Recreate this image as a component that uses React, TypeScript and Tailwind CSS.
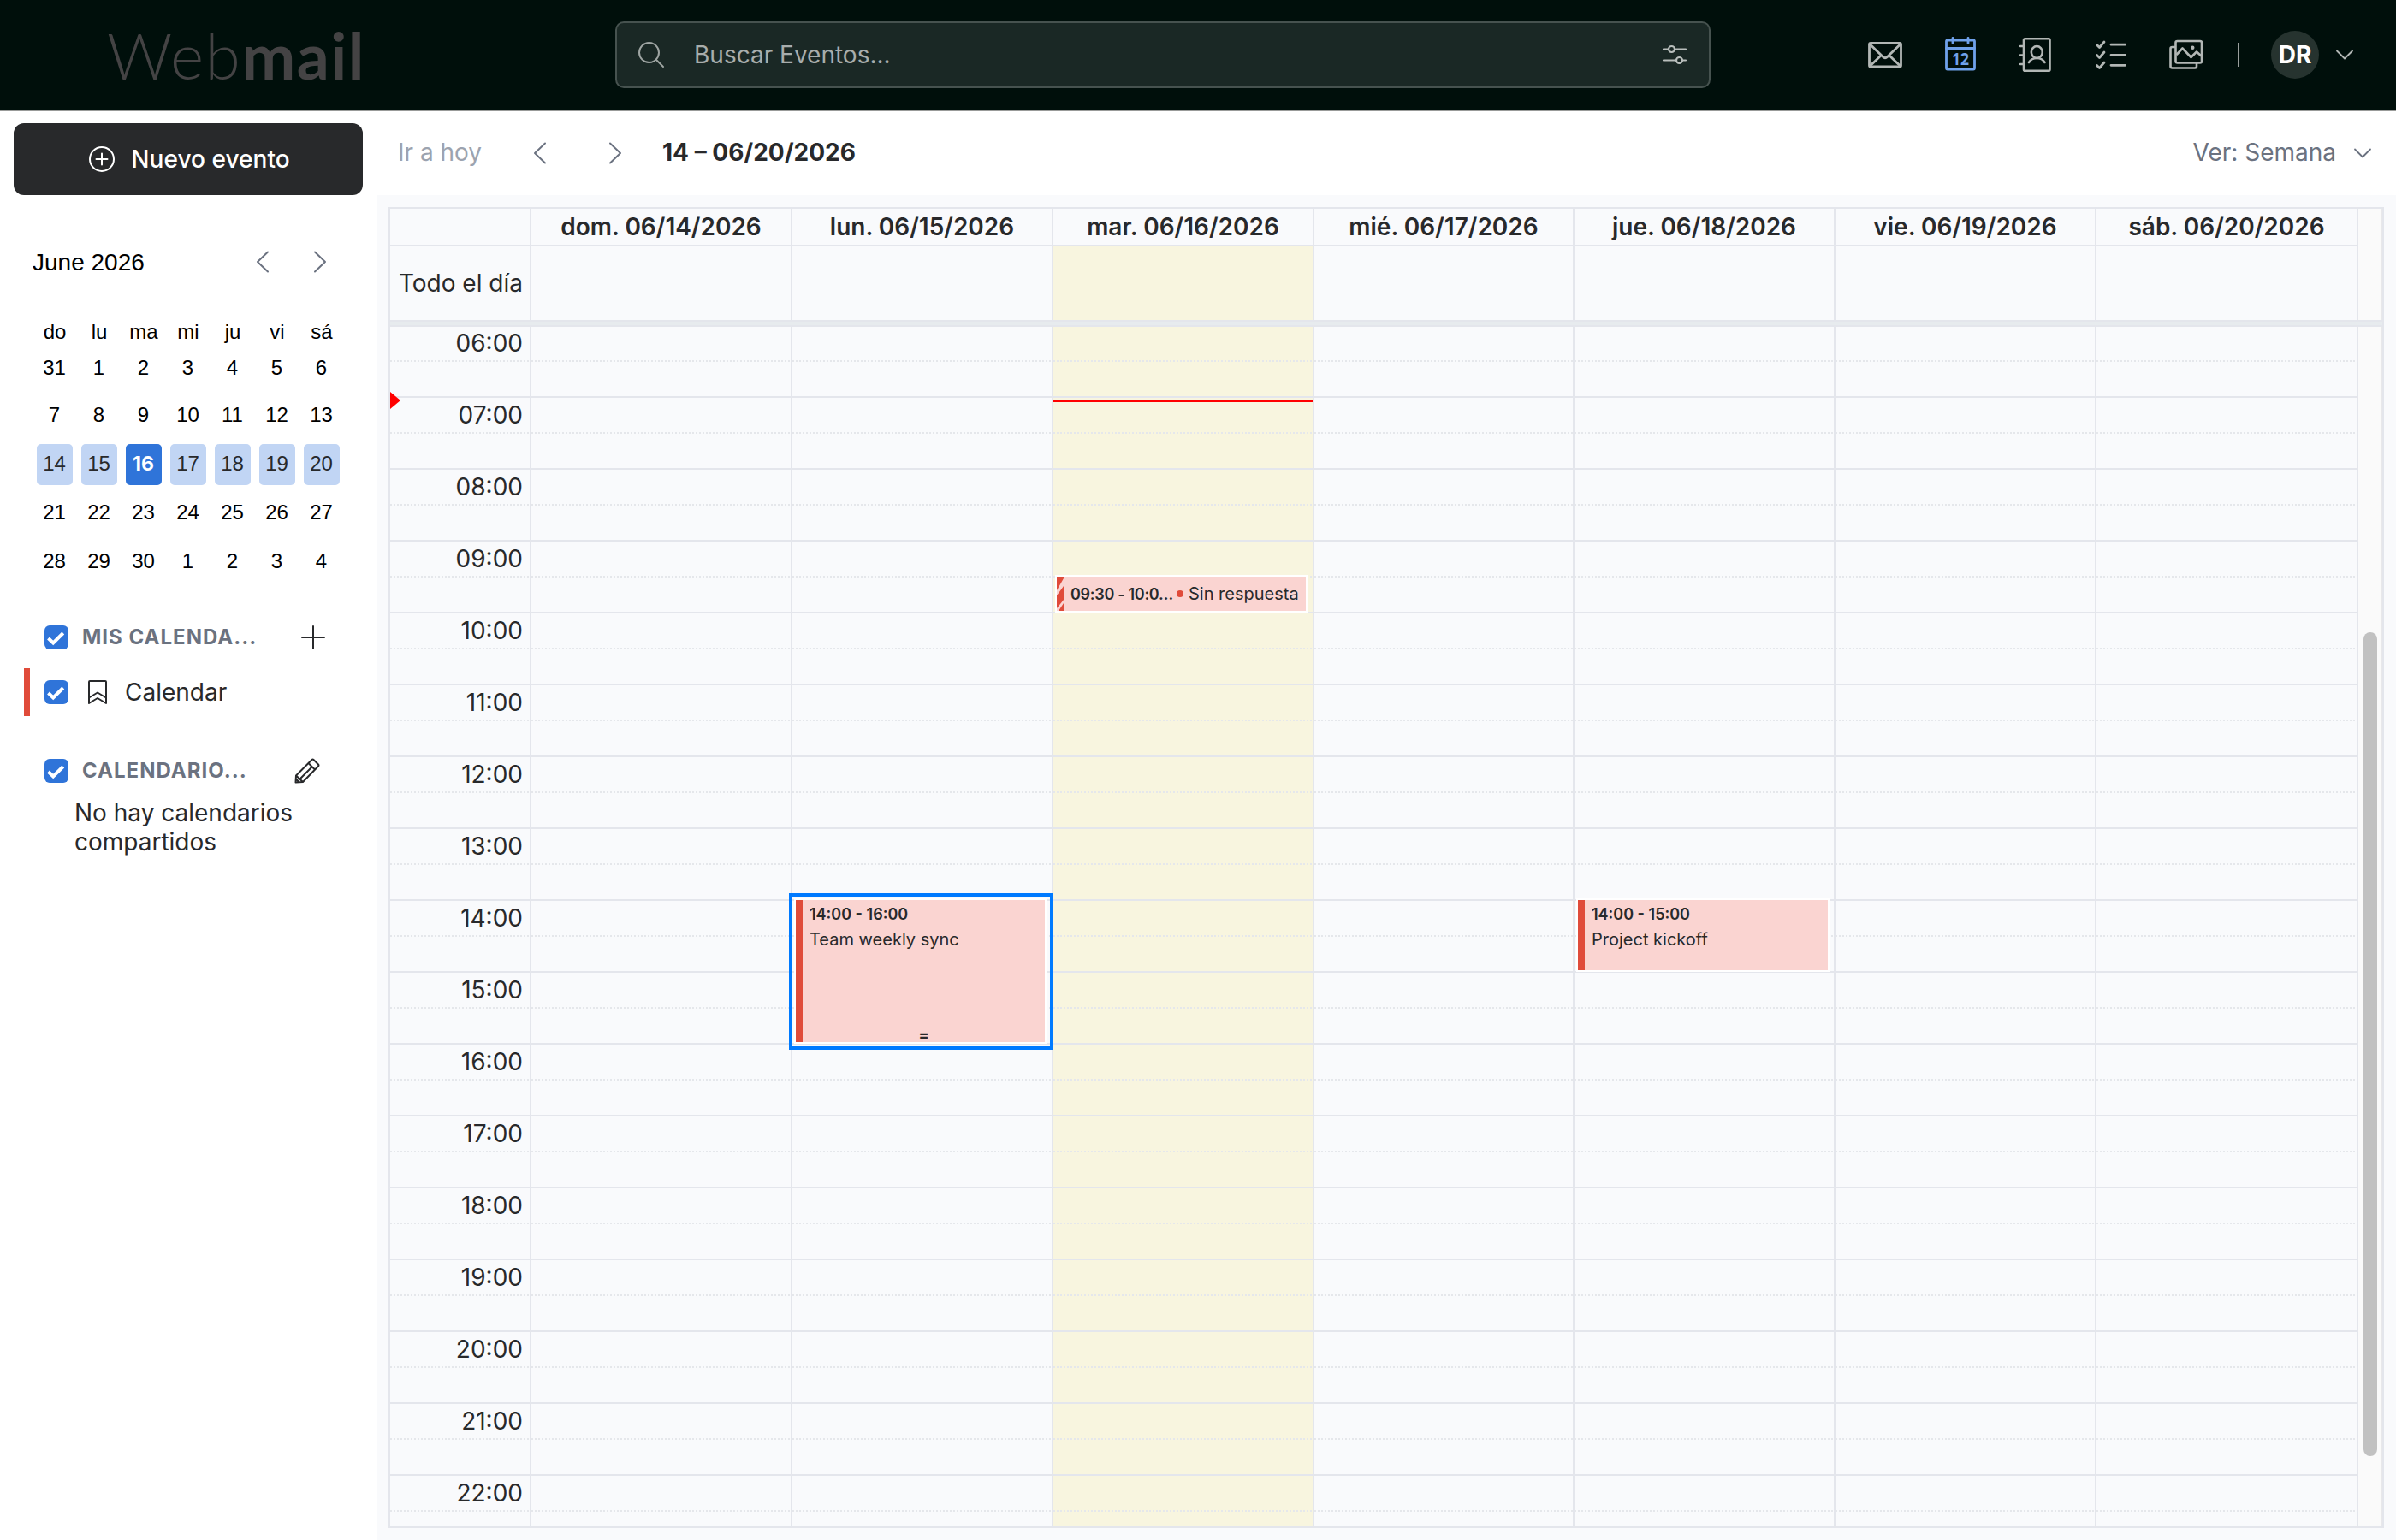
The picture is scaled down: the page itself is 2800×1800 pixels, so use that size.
import React from "react";

const days = [
  "dom. 06/14/2026",
  "lun. 06/15/2026",
  "mar. 06/16/2026",
  "mié. 06/17/2026",
  "jue. 06/18/2026",
  "vie. 06/19/2026",
  "sáb. 06/20/2026",
];
const hours = Array.from({ length: 17 }, (_, i) => `${String(i + 6).padStart(2, "0")}:00`);
const weekdays = ["do", "lu", "ma", "mi", "ju", "vi", "sá"];
const weeks = [
  [31, 1, 2, 3, 4, 5, 6],
  [7, 8, 9, 10, 11, 12, 13],
  [14, 15, 16, 17, 18, 19, 20],
  [21, 22, 23, 24, 25, 26, 27],
  [28, 29, 30, 1, 2, 3, 4],
];

const columns = "grid grid-cols-[165px_305px_305px_305px_304px_305px_305px_306px]";

function Chevron({ dir, className = "" }: { dir: "left" | "right" | "down"; className?: string }) {
  if (dir === "down")
    return (
      <svg className={`h-[12px] w-[22px] ${className}`} viewBox="0 0 22 12" fill="none" stroke="currentColor" strokeWidth="1.8" strokeLinecap="round" strokeLinejoin="round">
        <path d="M2 1.500 11 10.500 20 1.500" />
      </svg>
    );
  return (
    <svg className={`h-[26px] w-[16px] ${className}`} viewBox="0 0 16 26" fill="none" stroke="currentColor" strokeWidth="2" strokeLinecap="round" strokeLinejoin="round">
      <path d={dir === "left" ? "M14 1.5 2 13 14 24.5" : "M2 1.5 14 13 2 24.5"} />
    </svg>
  );
}

function Header() {
  return (
    <header className="flex h-[130px] items-center border-b-2 border-[#999b99] bg-[#000f0b]">
      <div className="w-[719px] shrink-0 pl-[125px]">
        <div className="flex h-[120px] items-center whitespace-nowrap font-[Lato] text-[75px] leading-[90px] tracking-[1.5px] text-[#444344]">
          <span className="font-light">Web</span>
          <span className="font-bold">mail</span>
        </div>
      </div>
      <div className="flex h-[78px] w-[1280px] shrink-0 items-center rounded-[10px] border-2 border-[#46524f] bg-[#1a2825]">
        <svg className="ml-[24px] h-[32px] w-[32px]" viewBox="0 0 32 32" fill="none" stroke="#9fa5a3" strokeWidth="2" strokeLinecap="round">
          <circle cx="13.5" cy="13.5" r="11.5" />
          <path d="M22 22 30 30" />
        </svg>
        <span className="ml-[34px] flex-1 text-[28px] text-[#a8adac]">Buscar Eventos...</span>
        <svg className="mr-[25px] h-[24px] w-[30px]" viewBox="0 0 30 24" fill="none" stroke="#b9bebc" strokeWidth="2.2" strokeLinecap="round">
          <path d="M2 5.5H8M15 5.5H28M2 18.5H17M24 18.5H28" />
          <circle cx="11.5" cy="5.5" r="3.5" />
          <circle cx="20.5" cy="18.5" r="3.5" />
        </svg>
      </div>
      <nav className="ml-[182px] flex items-center text-[#b2b7b5]">
        <svg className="h-[44px] w-[44px]" viewBox="0 0 44 44" fill="none" stroke="currentColor" strokeWidth="2.8" strokeLinejoin="round">
          <rect x="3.5" y="8.5" width="37" height="27.5" rx="1.5" />
          <path d="M4.500 10 19.500 24.500Q22 27 24.500 24.500L39.500 10M4.500 35 17.500 22.500M39.500 35 26.500 22.500" />
        </svg>
        <svg className="ml-[44px] h-[44px] w-[44px] text-[#6fa1ea]" viewBox="0 0 44 44" fill="none" stroke="currentColor" strokeWidth="2.8" strokeLinecap="round" strokeLinejoin="round">
          <rect x="5.5" y="5" width="33" height="34" rx="1.500" />
          <path d="M5.500 14.500H38.500M13 2.500V8.500M31 2.500V8.500" />
          <text x="22" y="33.500" textAnchor="middle" fontSize="20" fontWeight="700" fill="currentColor" stroke="none" fontFamily="Noto Sans, sans-serif" textLength="20" lengthAdjust="spacingAndGlyphs">12</text>
        </svg>
        <svg className="ml-[43px] h-[44px] w-[44px]" viewBox="0 0 44 44" fill="none" stroke="currentColor" strokeWidth="2.600" strokeLinecap="round" strokeLinejoin="round">
          <rect x="9" y="3.300" width="30.500" height="37.500" rx="1.500" />
          <path d="M5 12H9M5 22.500H9M5 33H9" />
          <ellipse cx="24.300" cy="19" rx="6.500" ry="7" />
          <path d="M15 31C17 27.500 20 26 24.300 26S31.500 27.500 33.500 31" />
        </svg>
        <svg className="ml-[45px] h-[44px] w-[44px]" viewBox="0 0 44 44" fill="none" stroke="currentColor" strokeWidth="2.800" strokeLinecap="round" strokeLinejoin="round">
          <path d="M5.500 10.500 8.500 13.500 14 7M5.500 22.500 8.500 25.500 14 19M5.500 34.500 8.500 37.500 14 31M22 10.200H38.500M22 22.300H38.500M22 34.300H38.500" />
        </svg>
        <svg className="ml-[44px] h-[44px] w-[44px]" viewBox="0 0 44 44" fill="none" stroke="currentColor" strokeWidth="2.600" strokeLinejoin="round">
          <rect x="9.500" y="6" width="30.500" height="25.500" rx="2" />
          <path d="M9.500 13H5.500Q3.500 13 3.500 15V35.500Q3.500 37.500 5.500 37.500H32Q34 37.500 34 35.500V31.500M10.500 22 17.500 14.500 27.500 25 34 18.500 39.500 23.500" />
          <circle cx="29.300" cy="13.700" r="2.200" fill="currentColor" stroke="none" />
        </svg>
        <span className="ml-[38px] h-[28px] w-[2px] bg-[#9a9f9d]" />
        <span className="ml-[37px] flex h-[56px] w-[56px] items-center justify-center rounded-full bg-[#26332f] text-[28px] font-bold text-white">DR</span>
        <Chevron dir="down" className="ml-[19px]" />
      </nav>
    </header>
  );
}

function Checkbox() {
  return (
    <span className="flex h-[28px] w-[28px] shrink-0 items-center justify-center rounded-[6px] bg-[#2f74d9]">
      <svg className="h-[28px] w-[28px]" viewBox="0 0 28 28" fill="none" stroke="#fff" strokeWidth="4">
        <path d="M4.500 15 10.200 20.500 21.800 9" />
      </svg>
    </span>
  );
}

function MiniMonth() {
  return (
    <section className="font-['Liberation_Sans',sans-serif] text-black">
      <div className="mt-[56px] flex h-[44px] items-center pl-[38px] pr-[58px] text-[28px]">
        <span className="flex-1 pt-[1px]">June 2026</span>
        <Chevron dir="left" className="text-[#6b7280]" />
        <Chevron dir="right" className="ml-[51px] text-[#6b7280]" />
      </div>
      <div className="mt-[46px] grid w-[402px] grid-cols-7 pl-[38px] text-center text-[24px] leading-[28px]">
        {weekdays.map((d) => (
          <span key={d}>{d}</span>
        ))}
      </div>
      <div className="grid w-[402px] grid-cols-7 pl-[38px] pt-px text-[24px]">
        {weeks.map((w, r) =>
          w.map((d, c) => (
            <div key={`${r}-${c}`} className={`flex items-center justify-center ${r === 0 ? "h-[54px]" : "h-[57px]"}`}>
              <span
                className={`flex h-[48px] w-[42px] items-center justify-center rounded-[5px] pb-px pr-px ${
                  r === 2
                    ? c === 2
                      ? "bg-[#2f74d9] font-[Inter] text-[23px] font-bold text-white"
                      : "bg-[#c1d5f4] text-[#28292b]"
                    : ""
                }`}
              >
                {d}
              </span>
            </div>
          )),
        )}
      </div>
    </section>
  );
}

function Sidebar() {
  return (
    <aside className="flex w-[440px] shrink-0 flex-col bg-white text-[#28292b]">
      <button className="ml-[16px] mt-[14px] flex h-[84px] w-[408px] items-center justify-center rounded-[12px] bg-[#28292b] pl-[2px] text-[28px] font-medium tracking-[0.05px] text-white">
        <svg className="mr-[18px] h-[32px] w-[32px]" viewBox="0 0 32 32" fill="none" stroke="#fff" strokeWidth="2" strokeLinecap="round">
          <circle cx="16" cy="16" r="14" />
          <path d="M9.500 16H22.500M16 9.500V22.500" />
        </svg>
        Nuevo evento
      </button>
      <MiniMonth />
      <div className="mt-[32px] flex h-[56px] items-center pl-[52px]">
        <Checkbox />
        <span className="ml-[16px] w-[256px] text-[24px] font-bold tracking-[1px] text-[#6b7280]">MIS CALENDA...</span>
        <svg className="h-[28px] w-[28px]" viewBox="0 0 28 28" fill="none" stroke="#28292b" strokeWidth="2" strokeLinecap="round">
          <path d="M14 1V27M1 14H27" />
        </svg>
      </div>
      <div className="ml-[28px] mt-[8px] flex h-[56px] items-center border-l-[7px] border-[#e04b3a] pl-[17px]">
        <Checkbox />
        <svg className="ml-[22px] h-[30px] w-[24px]" viewBox="0 0 24 30" fill="none" stroke="#28292b" strokeWidth="2" strokeLinejoin="round">
          <path d="M2 28V3Q2 2 3 2H21Q22 2 22 3V28L12 22ZM2 21.500 12 15.500 22 21.500" />
        </svg>
        <span className="ml-[20px] text-[28px]">Calendar</span>
      </div>
      <div className="mt-[36px] flex h-[56px] items-center pl-[52px]">
        <Checkbox />
        <span className="ml-[16px] w-[248px] text-[24px] font-bold tracking-[1px] text-[#6b7280]">CALENDARIO...</span>
        <svg className="h-[30px] w-[30px]" viewBox="0 0 30 30" fill="none" stroke="#28292b" strokeWidth="2" strokeLinejoin="round">
          <path d="M1.500 28.500 2 20.500 20.500 2Q21.500 1 22.500 2L28 7.500Q29 8.500 28 9.500L10 28ZM2 20.500 10 28M16.500 6 24 13.500M21 10 6.500 24.500M2 24.500 5.500 28.300" />
        </svg>
      </div>
      <p className="ml-[87px] mt-[4px] w-[300px] text-[28px] leading-[34px]">
        No hay calendarios
        <br />
        compartidos
      </p>
    </aside>
  );
}

function Toolbar() {
  return (
    <div className="flex h-[98px] shrink-0 items-center bg-white pl-[25px] pr-[28px] text-[28px] leading-[34px]">
      <span className="w-[158px] pb-[2px] text-[#9ca3af]">Ir a hoy</span>
      <Chevron dir="left" className="text-[#6b7280]" />
      <Chevron dir="right" className="ml-[72px] text-[#6b7280]" />
      <span className="ml-[47px] flex-1 pb-[2px] font-bold text-[#28292b]">14 – 06/20/2026</span>
      <span className="pb-[2px] text-[#6b7280]">Ver: Semana</span>
      <Chevron dir="down" className="ml-[20px] text-[#6b7280]" />
    </div>
  );
}

function EventBox({ time, title, className, selected }: { time: string; title: string; className: string; selected?: boolean }) {
  return (
    <div className={`absolute border-2 border-white bg-[#fad4d1] text-[#28292b] ${className}`}>
      <div className="h-full border-l-8 border-[#e04b3a] pl-[8px] pt-[5px]">
        <div className="text-[18px] font-semibold leading-[24px]">{time}</div>
        <div className="mt-[3px] text-[20px] leading-[28px]">{title}</div>
      </div>
      {selected && (
        <>
          <span className="absolute bottom-[-1px] left-0 w-full pl-[8px] text-center text-[18px] font-bold leading-[18px]">=</span>
          <span className="absolute -bottom-[9px] -left-[8px] -right-[10px] -top-[8px] border-4 border-[#007aff]" />
        </>
      )}
    </div>
  );
}

function PendingEvent() {
  return (
    <div className="absolute left-[2px] top-[290px] flex h-[44px] w-[295px] items-center border-2 border-white bg-[#fad4d1] text-[#28292b]">
      <svg className="h-[40px] w-[8px]" viewBox="0 0 8 40" fill="#e04b3a">
        <path d="M0 0H8V2L0 16ZM8 11V27L0 37V22ZM8 31V40H2Z" />
      </svg>
      <span className="ml-[8px] w-[124px] whitespace-nowrap text-[18px] font-semibold tracking-[-0.3px]">09:30 - 10:0…</span>
      <span className="h-[8px] w-[8px] rounded-full bg-[#e04b3a]" />
      <span className="ml-[6px] whitespace-nowrap text-[20px]">Sin respuesta</span>
    </div>
  );
}

function Slots({ labels }: { labels?: boolean }) {
  return (
    <div className="-mt-px">
      {hours.map((h) => (
        <div key={h} className="h-[84px] border-b-2 border-[#e4e6ec]">
          <div className="h-[40px] pr-[8px] pt-[3px] text-right text-[28px] leading-[34px]">{labels ? h : ""}</div>
          <div className="h-[2px] bg-[repeating-linear-gradient(90deg,#e5e7eb_0_2px,transparent_2px_4px)]" />
        </div>
      ))}
    </div>
  );
}

function WeekGrid() {
  return (
    <div className="mx-[14px] mb-[14px] mt-[14px] flex h-[1544px] flex-col border-2 border-[#e4e6ec] text-[#28292b]">
      <div className="flex h-[130px] shrink-0">
        <div className="w-[2300px] shrink-0">
          <div className={`${columns} h-[44px] border-b-2 border-[#e4e6ec]`}>
            <span className="border-r-2 border-[#e4e6ec]" />
            {days.map((d) => (
              <span key={d} className="border-r-2 border-[#e4e6ec] text-center text-[28px] font-semibold leading-[42px]">
                {d}
              </span>
            ))}
          </div>
          <div className={`${columns} h-[86px]`}>
            <span className="border-r-2 border-[#e4e6ec] pr-[8px] text-right text-[28px] leading-[86px]">Todo el día</span>
            {days.map((d, i) => (
              <span key={d} className={`border-r-2 border-[#e4e6ec] ${i === 2 ? "bg-[#f8f5df]" : ""}`} />
            ))}
          </div>
        </div>
        <div className="flex-1 border-r-2 border-[#e8e8ea] bg-[#fafafa]" />
      </div>
      <div className="h-[8px] shrink-0 border-y-2 border-[#e4e6ec] bg-[#e7ebee]" />
      <div className="flex min-h-0 flex-1 overflow-hidden">
        <div className={`${columns} relative w-[2300px] shrink-0`}>
          <div className="relative border-r-2 border-[#e4e6ec]">
            <Slots labels />
            <span className="absolute left-0 top-[76px] h-[20px] w-[12px] bg-[#ff0000] [clip-path:polygon(0_0,100%_50%,0_100%)]" />
          </div>
          {days.map((d, i) => (
            <div key={d} className={`relative border-r-2 border-[#e4e6ec] ${i === 2 ? "bg-[#f8f5df]" : ""}`}>
              <Slots />
              {i === 1 && <EventBox selected time="14:00 - 16:00" title="Team weekly sync" className="left-[2px] top-[668px] z-10 h-[170px] w-[295px]" />}
              {i === 2 && <span className="absolute left-0 top-[86px] h-[2px] w-full bg-[#ff0000]" />}
              {i === 2 && <PendingEvent />}
              {i === 4 && <EventBox time="14:00 - 15:00" title="Project kickoff" className="left-[2px] top-[668px] h-[86px] w-[296px]" />}
            </div>
          ))}
        </div>
        <div className="flex-1 border-r-2 border-[#e8e8ea] bg-[#fafafa] pl-[6px] pt-[357px]">
          <div className="h-[963px] w-[16px] rounded-full bg-[#c1c1c1]" />
        </div>
      </div>
    </div>
  );
}

export default function App() {
  return (
    <div className="flex h-[1800px] w-[2800px] flex-col overflow-hidden bg-white font-[Inter,sans-serif]">
      <Header />
      <div className="flex flex-1">
        <Sidebar />
        <main className="flex flex-1 flex-col bg-[#f9fafc]">
          <Toolbar />
          <WeekGrid />
        </main>
      </div>
    </div>
  );
}
